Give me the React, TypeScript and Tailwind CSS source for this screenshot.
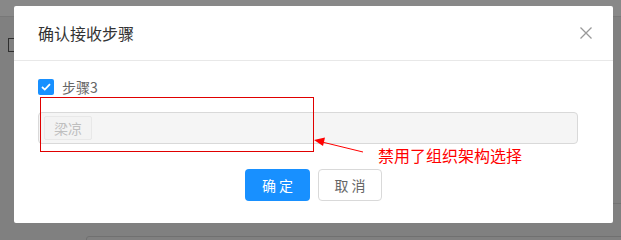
import React from "react";

const font = { fontFamily: '"Noto Sans CJK SC", "Noto Sans", sans-serif' };

function CloseIcon() {
  return (
    <svg width="12" height="12" viewBox="0 0 12 12" fill="none">
      <path d="M0.5 0.5 L11.5 11.5 M11.5 0.5 L0.5 11.5" stroke="#999" strokeWidth="1.3" />
    </svg>
  );
}

function CheckBox() {
  return (
    <span className="flex h-4 w-4 items-center justify-center rounded-[2px] bg-[#1890ff]">
      <svg width="10" height="8" viewBox="0 0 10 8" fill="none">
        <path d="M1 4 L3.8 6.6 L9 1.2" stroke="#fff" strokeWidth="1.8" />
      </svg>
    </span>
  );
}

export default function App() {
  return (
    <div className="relative h-[240px] w-[621px] overflow-hidden bg-[#808080]" style={font}>
      {/* dimmed page behind the modal */}
      <div className="absolute left-0 top-0 h-[17px] w-full border-b border-[#787878] bg-[#888888]" />
      <div className="absolute left-[8px] top-[38px] h-[14px] w-[14px] border border-[#2e2e2e]" />
      <div className="absolute left-[86px] top-[236px] h-[10px] w-[560px] rounded-t-[3px] border border-[#707070]" />
      <div className="absolute left-[613px] top-[203px] h-px w-[10px] bg-[#737373]" />

      <div className="relative pl-[14px] pt-[6px]">
        <div className="w-[599px] rounded-[2px] bg-white">
          <div className="flex h-[55px] items-center justify-between border-b border-[#e8e8e8] pl-6 pr-[21px]">
            <span className="text-[16px] leading-[22px] text-[#333]">确认接收步骤</span>
            <CloseIcon />
          </div>

          <div className="px-6 pb-[22px] pt-[15px]">
            <div className="flex h-[22px] items-center gap-2">
              <CheckBox />
              <span className="text-[14px] leading-[22px] text-[#666]">步骤3</span>
            </div>

            <div className="mt-[14px] flex h-[32px] w-[540px] items-center rounded-[4px] border border-[#d9d9d9] bg-[#f5f5f5] pl-[5px]">
              <span className="flex h-[24px] items-center rounded-[2px] border border-[#e8e8e8] bg-[#f3f3f3] px-[9px] text-[14px] text-[#bfbfbf]">
                梁凉
              </span>
            </div>

            <div className="mt-[25px] flex justify-center gap-2">
              <button className="h-[32px] w-[65px] rounded-[4px] bg-[#1890ff] text-[14px] text-white">
                确 定
              </button>
              <button className="h-[32px] w-[64px] rounded-[4px] border border-[#d9d9d9] bg-white text-[14px] text-[#666]">
                取 消
              </button>
            </div>
          </div>
        </div>
      </div>

      {/* annotation */}
      <div className="absolute left-[40px] top-[97px] h-[55px] w-[274px] border border-[#e00000]" />
      <svg className="absolute left-0 top-0" width="621" height="240">
        <line x1="363" y1="152" x2="322" y2="142" stroke="#ff0000" strokeWidth="1" />
        <polygon points="314,140 325,137.5 323,146" fill="#ff0000" />
      </svg>
      <span className="absolute left-[378px] top-[145px] text-[16px] leading-[20px] text-[#ff0000]">
        禁用了组织架构选择
      </span>
    </div>
  );
}
